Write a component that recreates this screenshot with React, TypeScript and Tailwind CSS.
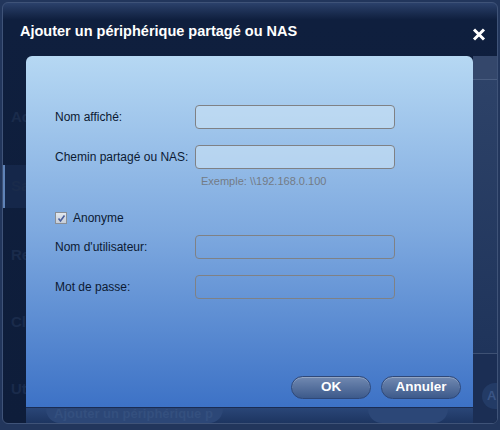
import React from "react";

const font = { fontFamily: '"Liberation Sans", Arial, sans-serif' };

function Field({ label, light }: { label: string; light?: boolean }) {
  return (
    <div className="flex items-center h-[24px]">
      <div className="w-[140px] text-[12px] text-[#0c1a33]">{label}</div>
      <div
        className={
          "w-[200px] h-[24px] rounded-[4px] border border-[#7f8185] " +
          (light ? "bg-[#c4def3]/70" : "bg-transparent")
        }
      />
    </div>
  );
}

export default function App() {
  return (
    <div className="w-[500px] h-[430px] bg-[#22365c] overflow-hidden" style={font}>
      <div className="ml-[2px] mt-[2px] w-[496px] h-[422px] rounded-[6px] border border-[#3f5378] bg-gradient-to-b from-[#2b416b] via-[#0f1f3e] via-[4%] to-[#0e1d3a] flex flex-col overflow-hidden">
        {/* Title bar */}
        <div className="h-[53px] flex items-start pt-[18px] pl-[17px] pr-[11px] shrink-0">
          <div className="text-[14.5px] font-bold text-white leading-[20px] flex-1">
            Ajouter un périphérique partagé ou NAS
          </div>
          <svg width="14" height="13" viewBox="0 0 14 13" className="mt-[7px]">
            <path d="M2 1.5 L12 11.5 M12 1.5 L2 11.5" stroke="white" strokeWidth="3" strokeLinecap="butt" />
          </svg>
        </div>
        {/* Body */}
        <div className="flex flex-1">
          {/* Left faint strip */}
          <div className="w-[23px] shrink-0 flex flex-col text-[15px] font-bold text-[#1a2b4b] pt-[50px]">
            <div className="h-[67px] pl-[8px]">Ac</div>
            <div className="h-[43px] pl-[6px] -mt-[8px] flex items-center bg-[#15274a] border-l-[2px] border-[#5f83b8]">Sa</div>
            <div className="h-[67px] pl-[8px] pt-[36px] box-content">Re</div>
            <div className="h-[67px] pl-[8px] -mt-[36px] pt-[36px] box-content">Clo</div>
            <div className="pl-[8px]">Uti</div>
          </div>
          {/* Panel column */}
          <div className="w-[447px] shrink-0 flex flex-col">
            <div className="h-[351px] rounded-t-[6px] bg-gradient-to-b from-[#b6d8f3] via-[#7ea9df] via-[50%] to-[#3d72c6] flex flex-col pl-[29px] pt-[49px]">
              <Field label="Nom affiché:" light />
              <div className="h-[16px]" />
              <Field label="Chemin partagé ou NAS:" light />
              <div className="pl-[146px] mt-[5px] text-[11px] text-[#737b86] leading-[14px]">
                Exemple: \\192.168.0.100
              </div>
              <div className="flex items-center mt-[22px] h-[16px]">
                <div className="w-[12px] h-[12px] border border-[#8a8f96] bg-gradient-to-b from-[#e2e8ef] to-[#c6ced9] flex items-center justify-center">
                  <svg width="9" height="9" viewBox="0 0 9 9">
                    <path d="M1.5 4.5 L3.5 7 L7.5 1.5" stroke="#4a5f9c" strokeWidth="1.6" fill="none" />
                  </svg>
                </div>
                <span className="ml-[6px] text-[12px] text-[#0c1a33]">Anonyme</span>
              </div>
              <div className="h-[9px]" />
              <Field label="Nom d'utilisateur:" />
              <div className="h-[16px]" />
              <Field label="Mot de passe:" />
              <div className="flex-1" />
              <div className="flex justify-end gap-[10px] pr-[12px] pb-[8px]">
                <button className="w-[80px] h-[23px] rounded-full border border-[#2f4878] bg-gradient-to-b from-[#7189b1] to-[#3d5a8b] text-white text-[13.5px] font-bold shadow-[inset_0_1px_0_rgba(255,255,255,0.25)]">
                  OK
                </button>
                <button className="w-[80px] h-[23px] rounded-full border border-[#2f4878] bg-gradient-to-b from-[#7189b1] to-[#3d5a8b] text-white text-[13.5px] font-bold shadow-[inset_0_1px_0_rgba(255,255,255,0.25)]">
                  Annuler
                </button>
              </div>
            </div>
            <div className="flex-1 border-t border-[#1a2c52] bg-gradient-to-b from-[#2a4677] to-[#1d3561] flex items-start pt-[1px]">
              <div className="ml-[20px] w-[177px] h-[14px] rounded-b-full bg-[#2c4777] text-[13px] font-bold text-[#34507f] leading-[10px] pl-[8px] overflow-hidden">
                Ajouter un périphérique p
              </div>
              <div className="ml-auto mr-[25px] w-[80px] h-[14px] rounded-b-full bg-[#2c4777]" />
            </div>
          </div>
          {/* Right strip */}
          <div className="flex-1 flex flex-col">
            <div className="h-[24px] bg-[#34476b] border-b border-[#4a5d80]" />
            <div className="h-[274px] bg-gradient-to-b from-[#2d4268] to-[#1f345b] border-b border-[#3e5174]" />
            <div className="flex-1 bg-[#1b2e54] flex flex-col justify-end pb-[14px]">
              <div className="ml-[9px] h-[26px] rounded-l-full bg-[#233b66] text-[13px] font-bold text-[#3a5585] pl-[5px] flex items-center">A</div>
            </div>
          </div>
        </div>
      </div>
    </div>
  );
}
